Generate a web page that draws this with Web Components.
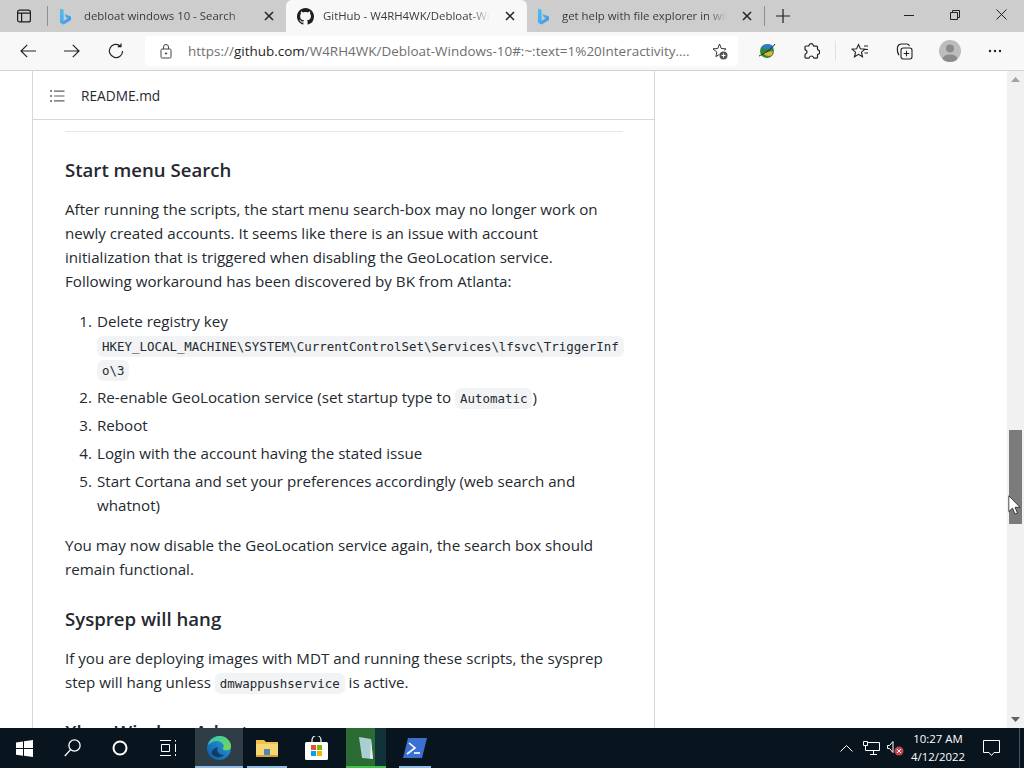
<!DOCTYPE html>
<html>
<head>
<meta charset="utf-8">
<title>GitHub - W4RH4WK/Debloat-Windows-10</title>
<style>
    html, body { margin: 0; height: 100%; overflow: hidden; background: #fff; }
    body { font-family: "Open Sans", "Liberation Sans", sans-serif; }
    #app { width: 1024px; height: 768px; display: flex; flex-direction: column; position: relative; overflow: hidden; }
</style>
</head>
<body>
<div id="app">
    <tab-strip>
        <browser-tab icon="bing">debloat windows 10 - Search</browser-tab>
        <browser-tab icon="github" active>GitHub - W4RH4WK/Debloat-Windows-10</browser-tab>
        <browser-tab icon="bing" style="margin-left:-1px">get help with file explorer in windows 10</browser-tab>
    </tab-strip>
    <address-bar></address-bar>
    <page-view>
        <readme-panel>
            <md-heading>Start menu Search</md-heading>
            <md-para>After running the scripts, the start menu search-box may no longer work on<br>newly created accounts. It seems like there is an issue with account<br>initialization that is triggered when disabling the GeoLocation service.<br>Following workaround has been discovered by BK from Atlanta:</md-para>
            <md-steps>
                <md-step n="1">Delete registry key<br><md-code>HKEY_LOCAL_MACHINE\SYSTEM\CurrentControlSet\Services\lfsvc\TriggerInf<br>o\3</md-code></md-step>
                <md-step n="2">Re-enable GeoLocation service (set startup type to <md-code>Automatic</md-code>)</md-step>
                <md-step n="3">Reboot</md-step>
                <md-step n="4">Login with the account having the stated issue</md-step>
                <md-step n="5">Start Cortana and set your preferences accordingly (web search and<br>whatnot)</md-step>
            </md-steps>
            <md-para>You may now disable the GeoLocation service again, the search box should<br>remain functional.</md-para>
            <md-heading>Sysprep will hang</md-heading>
            <md-para>If you are deploying images with MDT and running these scripts, the sysprep<br>step will hang unless <md-code>dmwappushservice</md-code> is active.</md-para>
            <md-heading>Xbox Wireless Adapter</md-heading>
        </readme-panel>
    </page-view>
    <win-taskbar></win-taskbar>
    <mouse-cursor></mouse-cursor>
</div>

<script>
const ICONS = {
    bing: `<svg width="13" height="17" viewBox="0 0 13 17"><defs><linearGradient id="b" x1="0" y1="0" x2="1" y2="1"><stop offset="0" stop-color="#4cc4ee"/><stop offset="1" stop-color="#4a8fe6"/></linearGradient></defs><path fill="url(#b)" d="M1 .5l3.600 1.300v10.900l4.200-2.400-2-1-1.300-3.300 6.500 2.400v3.700l-7.400 4.400L1 14.700z"/></svg>`,
    github: `<svg width="17" height="17" viewBox="0 0 16 16"><path fill="#1b1f23" d="M8 0C3.580 0 0 3.580 0 8c0 3.540 2.290 6.530 5.470 7.590.4.070.55-.17.55-.38 0-.19-.01-.82-.01-1.490-2.010.37-2.530-.49-2.690-.94-.09-.23-.48-.94-.82-1.130-.28-.15-.68-.52-.01-.53.63-.01 1.080.58 1.230.82.72 1.210 1.870.87 2.330.66.07-.52.28-.87.51-1.070-1.780-.2-3.640-.89-3.640-3.950 0-.87.31-1.590.82-2.150-.08-.2-.36-1.020.08-2.120 0 0 .67-.21 2.200.82.64-.18 1.320-.27 2-.27s1.360.09 2 .27c1.530-1.040 2.200-.82 2.200-.82.44 1.100.16 1.920.08 2.120.51.56.82 1.270.82 2.150 0 3.070-1.870 3.750-3.650 3.950.29.25.54.73.54 1.480 0 1.070-.01 1.930-.01 2.200 0 .21.15.46.55.38A8.010 8.010 0 0 0 16 8c0-4.420-3.580-8-8-8z"/></svg>`
};

class TabStrip extends HTMLElement {
    connectedCallback() {
        this.attachShadow({ mode: 'open' });
        this.shadowRoot.innerHTML = `
            <style>
                :host { display: flex; height: 32px; background: #cdcdcd; flex: none; align-items: stretch; color: #1d1d1d; }
                .side { width: 47px; display: flex; align-items: center; justify-content: center; padding-left: 1px; box-sizing: border-box; }
                .sep { width: 1px; height: 20px; background: #8f8f8f; align-self: center; }
                .tabs { display: flex; }
                .plus { width: 35px; display: flex; align-items: center; justify-content: center; }
                .space { flex: 1; }
                .win { width: 46px; display: flex; align-items: center; justify-content: center; margin-top: -3px; }
            </style>
            <div class="side">
                <svg width="16" height="16" viewBox="0 0 16 16" fill="none" stroke="#1d1d1d" stroke-width="1.2"><rect x="1.6" y="2.1" width="12.8" height="11.8" rx="2"/><path d="M1.6 5.2h12.8M5.6 5.2v8.7"/></svg>
            </div>
            <div class="sep"></div>
            <div class="tabs"><slot></slot></div>
            <div class="sep"></div>
            <div class="plus">
                <svg width="14" height="14" viewBox="0 0 14 14" stroke="#222" stroke-width="1.2"><path d="M7 0v14M0 7h14"/></svg>
            </div>
            <div class="space"></div>
            <div class="win"><svg width="10" height="10" viewBox="0 0 10 10" stroke="#222"><path d="M0 5.5h10"/></svg></div>
            <div class="win"><svg width="10" height="10" viewBox="0 0 10 10" fill="none" stroke="#222"><path d="M.5 2.5h7v7h-7zM2.5 2.5v-2h7v7h-2"/></svg></div>
            <div class="win"><svg width="11" height="11" viewBox="0 0 11 11" stroke="#222"><path d="M.5.5l10 10M10.500.5l-10 10"/></svg></div>
        `;
    }
}

class BrowserTab extends HTMLElement {
    connectedCallback() {
        this.attachShadow({ mode: 'open' });
        this.shadowRoot.innerHTML = `
            <style>
                :host { display: flex; align-items: center; width: 238px; height: 32px; box-sizing: border-box; padding: 0 11px; font-size: 11.4px; color: #3a3a3a; }
                :host([active]) { background: #f8f8f8; border-radius: 6px 6px 0 0; width: 241px; }
                .ic { flex: none; width: 25px; height: 17px; display: flex; align-items: center; }
                :host([active]) .ic { width: 26px; }
                .t { flex: 1; min-width: 0; margin-top: -2px; white-space: nowrap; overflow: hidden; -webkit-mask-image: linear-gradient(90deg, #000 88%, transparent 100%); mask-image: linear-gradient(90deg, #000 88%, transparent 100%); }
                .x { flex: none; width: 11px; margin-left: 15px; display: flex; }
            </style>
            <span class="ic">${ICONS[this.getAttribute('icon')]}</span>
            <span class="t"><slot></slot></span>
            <span class="x"><svg width="10" height="10" viewBox="0 0 10 10" stroke="#222" stroke-width="1.5"><path d="M1 1l8 8M9 1l-8 8"/></svg></span>
        `;
    }
}

class AddressBar extends HTMLElement {
    connectedCallback() {
        this.attachShadow({ mode: 'open' });
        this.shadowRoot.innerHTML = `
            <style>
                :host { display: flex; align-items: center; height: 38px; flex: none; background: #f8f8f8; border-bottom: 1px solid #d2d2d2; }
                .btn { width: 44px; display: flex; align-items: center; justify-content: center; flex: none; }
                svg { display: block; }
                .nav { padding-left: 6px; display: flex; }
                .url { width: 593px; height: 30px; margin-left: 7px; margin-right: 7px; background: #fff; border-radius: 4px; display: flex; align-items: center; box-sizing: border-box; padding-left: 14px; flex: none; }
                .addr { margin-left: 15px; font-size: 13.47px; color: #6f6f6f; white-space: nowrap; flex: 1; }
                .addr b { font-weight: 400; color: #1f1f1f; }
                .star { margin-right: 10px; display: flex; }
                .sep { width: 1px; height: 20px; background: #e2e2e2; flex: none; margin-left: 2px; }
                .avatar { width: 22px; height: 22px; border-radius: 50%; background: #bdbdbd; overflow: hidden; }
            </style>
            <div class="nav">
                <div class="btn"><svg width="16" height="14" viewBox="0 0 16 14" fill="none" stroke="#222" stroke-width="1.2"><path d="M16 7H1M7.2.8L1 7l6.2 6.2"/></svg></div>
                <div class="btn"><svg width="16" height="14" viewBox="0 0 16 14" fill="none" stroke="#222" stroke-width="1.2"><path d="M0 7h15M8.8.8L15 7l-6.2 6.2"/></svg></div>
                <div class="btn"><svg width="16" height="16" viewBox="0 0 16 16" fill="none" stroke="#222" stroke-width="1.2"><path d="M14.6 8A6.6 6.6 0 1 1 12.4 3M13 .4V3.6H9.8"/></svg></div>
            </div>
            <div class="url">
                <svg width="14" height="16" viewBox="0 0 14 16" fill="none" stroke="#444"><rect x="2" y="6" width="10" height="9" rx="1.2"/><path d="M4.5 6V4a2.5 2.5 0 0 1 5 0v2"/><circle cx="7" cy="10.5" r=".7" fill="#444"/></svg>
                <span class="addr">https://<b>github.com</b>/W4RH4WK/Debloat-Windows-10#:~:text=1%20Interactivity....</span>
                <span class="star"><svg width="18" height="18" viewBox="0 0 18 18" fill="none" stroke="#333"><path d="M9.500 12.300l-3.600 2.300 1-4.500L3 6.900l4.800-.4L9.500 2l1.800 4.500 4.700.4-1.700 1.500"/><circle cx="13.500" cy="13.500" r="4" fill="#555" stroke="none"/><path d="M11.500 13.500h4M13.500 11.500v4" stroke="#fff"/></svg></span>
            </div>
            <div class="btn"><svg width="18" height="16" viewBox="0 0 18 16"><ellipse cx="9" cy="8" rx="7" ry="7" fill="#2f8a2f"/><path d="M3 5c3-4 9-5 12-2l-3 4z" fill="#2b7bd0"/><path d="M5 10c2 3 6 4 9 2l1-4-5 1z" fill="#e2b23a"/><path d="M1 13C4 12 14 6 17 1" stroke="#222" fill="none"/></svg></div>
            <div class="btn"><svg width="17" height="17" viewBox="0 0 17 17" fill="none" stroke="#222" stroke-width="1.2"><path d="M6 2.500a2.200 2.200 0 0 1 4.300-.2c.1.500.5.800 1 .8h2.200a1 1 0 0 1 1 1v2c0 .5.300.9.800 1a2.200 2.200 0 0 1 0 4.100c-.5.100-.8.500-.8 1v2a1 1 0 0 1-1 1h-2c-.5 0-.9-.3-1-.8a2.200 2.200 0 0 0-4.100 0c-.1.500-.5.800-1 .8H3a1 1 0 0 1-1-1v-2.500c0-.5.400-.8.800-1a2 2 0 0 0 0-3.700C2.400 7.300 2 7 2 6.500V4a1 1 0 0 1 1-1h2c.5 0 .9-.1 1-.5z"/></svg></div>
            <div class="sep"></div>
            <div class="btn" style="width:48px"><svg width="18" height="17" viewBox="0 0 18 17" fill="none" stroke="#222" stroke-width="1.1"><path d="M7.500 1.500l1.900 4.300 4.600.4-3.500 3 1 4.600-4-2.400-4 2.400 1-4.600L1 6.200l4.600-.4zM13 3h4M14 6.500h3M13.500 10h3.500"/></svg></div>
            <div class="btn" style="width:40px"><svg width="17" height="17" viewBox="0 0 17 17" fill="none" stroke="#222" stroke-width="1.1"><rect x="5" y="5" width="11" height="11" rx="2.200"/><path d="M10.500 7.700v5.600M7.700 10.500h5.600M3 12.200C1.500 10 1 7 1.500 4 2 2 3.500 1 5.500 1h5.500c1.300 0 2 .7 2.500 2"/></svg></div>
            <div class="btn" style="width:52px"><div class="avatar"><svg width="22" height="22" viewBox="0 0 22 22"><circle cx="11" cy="8.500" r="4" fill="#8b8b8b"/><ellipse cx="11" cy="19" rx="7.500" ry="4.500" fill="#8b8b8b"/></svg></div></div>
            <div class="btn" style="width:38px"><svg width="14" height="4" viewBox="0 0 14 4" fill="#222"><circle cx="2" cy="2" r="1.200"/><circle cx="7" cy="2" r="1.200"/><circle cx="12" cy="2" r="1.200"/></svg></div>
        `;
    }
}

class PageView extends HTMLElement {
    connectedCallback() {
        this.attachShadow({ mode: 'open' });
        this.shadowRoot.innerHTML = `
            <style>
                :host { display: flex; flex: 1; min-height: 0; background: #fff; overflow: hidden; }
                .main { flex: 1; min-width: 0; overflow: hidden; padding-left: 32px; }
                .bar { width: 17px; flex: none; background: #f1f1f1; display: flex; flex-direction: column; align-items: center; }
                .arrow { height: 17px; flex: none; display: flex; align-items: center; justify-content: center; }
                .track { flex: 1; }
                .thumb { width: 13px; height: 94px; margin-top: 342px; background: #7b7b7b; }
            </style>
            <div class="main"><slot></slot></div>
            <div class="bar">
                <div class="arrow"><svg width="9" height="5" viewBox="0 0 9 5"><path d="M4.500 0L9 5H0z" fill="#a3a3a3"/></svg></div>
                <div class="track"><div class="thumb"></div></div>
                <div class="arrow"><svg width="9" height="5" viewBox="0 0 9 5"><path d="M4.500 5L9 0H0z" fill="#606060"/></svg></div>
            </div>
        `;
    }
}

class ReadmePanel extends HTMLElement {
    connectedCallback() {
        this.attachShadow({ mode: 'open' });
        this.shadowRoot.innerHTML = `
            <style>
                :host { display: block; width: 623px; box-sizing: border-box; border: 1px solid #d8d8d8; border-width: 0 1px; color: #24292f; font-size: 15.15px; }
                .head { height: 49px; box-sizing: border-box; padding: 1px 0 0 16px; border-bottom: 1px solid #d8d8d8; display: flex; align-items: center; gap: 16px; font-size: 13.7px; }
                .head svg { display: block; }
                .body { padding: 11px 31px 0 32px; }
                hr { height: 1px; margin: 0 0 23px; border: 0; background: #e6e6e6; }
            </style>
            <div class="head">
                <svg width="16" height="16" viewBox="0 0 16 16" fill="#57606a"><path d="M2 4a1 1 0 1 0 0-2 1 1 0 0 0 0 2zM5 2.500h10.500v1.200H5zM2 9a1 1 0 1 0 0-2 1 1 0 0 0 0 2zM5 7.400h10.500v1.200H5zM2 14a1 1 0 1 0 0-2 1 1 0 0 0 0 2zM5 12.300h10.500v1.200H5z"/></svg>
                <span>README.md</span>
            </div>
            <div class="body"><hr><slot></slot></div>
        `;
    }
}

class MdHeading extends HTMLElement {
    connectedCallback() {
        this.attachShadow({ mode: 'open' });
        this.shadowRoot.innerHTML = `
            <style>
                :host { display: block; font-size: 18.6px; font-weight: 600; line-height: 30px; margin: 0 0 12px; white-space: nowrap; }
                :host(:not(:first-child)) { margin-top: 23px; }
            </style>
            <slot></slot>
        `;
    }
}

class MdPara extends HTMLElement {
    connectedCallback() {
        this.attachShadow({ mode: 'open' });
        this.shadowRoot.innerHTML = `
            <style>
                :host { display: block; line-height: 24px; margin: 0 0 16px; white-space: nowrap; }
            </style>
            <slot></slot>
        `;
    }
}

class MdSteps extends HTMLElement {
    connectedCallback() {
        this.attachShadow({ mode: 'open' });
        this.shadowRoot.innerHTML = `
            <style>
                :host { display: flex; flex-direction: column; gap: 4px; margin: 0 0 16px; padding-left: 32px; white-space: nowrap; }
            </style>
            <slot></slot>
        `;
    }
}

class MdStep extends HTMLElement {
    connectedCallback() {
        this.attachShadow({ mode: 'open' });
        this.shadowRoot.innerHTML = `
            <style>
                :host { display: block; position: relative; line-height: 24px; }
                .n { position: absolute; right: 100%; margin-right: 5px; }
            </style>
            <span class="n">${this.getAttribute('n')}.</span><slot></slot>
        `;
    }
}

class MdCode extends HTMLElement {
    connectedCallback() {
        this.attachShadow({ mode: 'open' });
        // no whitespace around the slot: it would show inside the grey box
        this.shadowRoot.innerHTML = `<style>
                :host { display: inline; font-family: "DejaVu Sans Mono", "Liberation Mono", monospace; font-size: 12.45px; line-height: 1; background: #f2f3f4; border-radius: 6px; padding: 3px 5px; -webkit-box-decoration-break: clone; box-decoration-break: clone; }
            </style><slot></slot>`;
    }
}

class WinTaskbar extends HTMLElement {
    connectedCallback() {
        this.attachShadow({ mode: 'open' });
        this.shadowRoot.innerHTML = `
            <style>
                :host { display: flex; height: 40px; flex: none; background: #08141e; color: #fff; align-items: stretch; }
                svg { display: block; }
                .btn { width: 48px; flex: none; display: flex; align-items: center; justify-content: center; position: relative; box-sizing: border-box; }
                .on::after { content: ""; position: absolute; left: 0; right: 0; bottom: 0; height: 2px; background: #90bde8; }
                .open::after { content: ""; position: absolute; left: 4px; right: 4px; bottom: 0; height: 2px; background: #90bde8; }
                .edge { background: #2f3d47; margin-left: 3px; }
                .green { width: 40px; margin-left: 6px; background: linear-gradient(90deg, #2b6b34 0, #2b6b34 29px, #12323a 29px); }
                .green::after { content: ""; position: absolute; left: 0; right: 0; bottom: 0; height: 2px; background: #3fc24a; }
                .space { flex: 1; }
                .tray { display: flex; align-items: center; }
                .tray > div { display: flex; justify-content: center; }
                .chev { width: 26px; }
                .ti { width: 24px; }
                .clock { width: 60px; margin-left: 1px; font-size: 11.4px; line-height: 18px; text-align: center; white-space: nowrap; flex-direction: column; }
                .notif { width: 44px; margin-left: 1px; margin-right: 6px; }
                .endline { width: 5px; align-self: stretch; border-left: 1px solid #4a5560; box-sizing: border-box; }
            </style>
            <div class="btn"><svg width="17" height="17" viewBox="0 0 17 17" fill="#fff"><path d="M0 2.400l7-1v6.700H0zM8 1.300L17 0v8.100H8zM0 9h7v6.700l-7-1zM8 9h9v8l-9-1.300z"/></svg></div>
            <div class="btn"><svg width="17" height="18" viewBox="0 0 17 18" fill="none" stroke="#fff" stroke-width="1.300"><circle cx="10.500" cy="6.500" r="5.600"/><path d="M6.600 10.600L.8 17"/></svg></div>
            <div class="btn"><svg width="16" height="16" viewBox="0 0 16 16" fill="none" stroke="#fff" stroke-width="2"><circle cx="8" cy="8" r="6.500"/></svg></div>
            <div class="btn"><svg width="17" height="16" viewBox="0 0 17 16" fill="none" stroke="#fff"><path d="M0 .5h11M0 15.500h11M1.500 4.500h8v7h-8zM15.500 0v1.500M15.500 4v8M15.500 14v2"/></svg></div>
            <div class="btn on edge"><svg width="26" height="26" viewBox="0 0 26 26"><defs><linearGradient id="e1" x1="0" y1="1" x2="1" y2="0"><stop offset="0" stop-color="#0c59a4"/><stop offset="1" stop-color="#2ba3e0"/></linearGradient><linearGradient id="e2" x1="0" y1="0" x2="1" y2="1"><stop offset="0" stop-color="#36c7b0"/><stop offset="1" stop-color="#7ad84f"/></linearGradient></defs><circle cx="13" cy="13" r="12" fill="url(#e1)"/><path d="M2 10C4 3 10 1 14 1c6 0 11 5 11 10 0 4-4 5-7 4-2-1-1-3 0-4-1-3-4-5-7-5-4 0-7 2-9 4z" fill="url(#e2)"/><path d="M12 12c-2 3 0 8 6 8-3 3-9 3-12-1-1-3 2-6 6-7z" fill="#08141e" opacity=".55"/></svg></div>
            <div class="btn open"><svg width="22" height="20" viewBox="0 0 22 20"><path d="M0 2h8l2 2h12v15H0z" fill="#f2c04c"/><path d="M0 6h22v13H0z" fill="#f7d774"/><rect x="8" y="11" width="6" height="6" fill="#4b88b8"/><path d="M0 17h22v2H0z" fill="#d9a334"/></svg></div>
            <div class="btn" style="margin-left:1px"><svg width="23" height="24" viewBox="0 0 23 24"><path d="M7 7V4a4.500 4.500 0 0 1 9 0v3" fill="none" stroke="#fff" stroke-width="1.200"/><rect x="0" y="6" width="23" height="18" rx="1.500" fill="#fff"/><rect x="6" y="9" width="5" height="5" fill="#e8502f"/><rect x="12" y="9" width="5" height="5" fill="#7ab800"/><rect x="6" y="15" width="5" height="5" fill="#00a4ef"/><rect x="12" y="15" width="5" height="5" fill="#f4b400"/></svg></div>
            <div class="btn green"><svg width="16" height="24" viewBox="0 0 16 24"><path d="M1 1l12 2 2 20-11-1z" fill="#a9cfd0"/><path d="M13 3l2 20-3-.5z" fill="#dfeeee"/></svg></div>
            <div class="btn open" style="margin-left:9px;width:40px"><svg width="24" height="20" viewBox="0 0 24 20"><path d="M5 0h19l-5 20H0z" fill="#3b6fd0"/><path d="M6 5l6 5-8 6" fill="none" stroke="#fff" stroke-width="1.600"/><path d="M11 15h6" stroke="#fff" stroke-width="1.600"/></svg></div>
            <div class="space"></div>
            <div class="tray">
                <div class="chev"><svg width="13" height="8" viewBox="0 0 13 8" fill="none" stroke="#fff"><path d="M.5 7.500l6-6 6 6"/></svg></div>
                <div class="ti"><svg width="17" height="14" viewBox="0 0 17 14" fill="none" stroke="#fff"><path d="M4.500 1.500H16.500v8H4.500M.5.500h4v4h-4zM2.500 4.500v5h5M10.500 9.500v4M7 13.500h7"/></svg></div>
                <div class="ti"><svg width="17" height="16" viewBox="0 0 17 16"><path d="M.5 5.500h2L6 1.500v11l-3.500-4h-2z" fill="none" stroke="#fff"/><circle cx="12" cy="11" r="4.500" fill="#c8414f"/><path d="M10 9l4 4M14 9l-4 4" stroke="#fff"/></svg></div>
                <div class="clock"><span>10:27 AM</span><span>4/12/2022</span></div>
                <div class="notif"><svg width="17" height="16" viewBox="0 0 17 16" fill="none" stroke="#fff"><path d="M.5.500h16v12H11l-2.500 3-2.500-3H.5z"/></svg></div>
                <div class="endline"></div>
            </div>
        `;
    }
}

class MouseCursor extends HTMLElement {
    connectedCallback() {
        this.attachShadow({ mode: 'open' });
        this.shadowRoot.innerHTML = `
            <style>
                :host { position: absolute; left: 1008px; top: 495px; width: 13px; height: 20px; }
                svg { display: block; }
            </style>
            <svg width="13" height="20" viewBox="0 0 13 20"><path d="M.8.800v15.800l3.700-3.500 2.500 6 2.500-1-2.500-5.800h5z" fill="#fff" stroke="#222" stroke-width=".8"/></svg>
        `;
    }
}

customElements.define('tab-strip', TabStrip);
customElements.define('browser-tab', BrowserTab);
customElements.define('address-bar', AddressBar);
customElements.define('page-view', PageView);
customElements.define('readme-panel', ReadmePanel);
customElements.define('md-heading', MdHeading);
customElements.define('md-para', MdPara);
customElements.define('md-steps', MdSteps);
customElements.define('md-step', MdStep);
customElements.define('md-code', MdCode);
customElements.define('win-taskbar', WinTaskbar);
customElements.define('mouse-cursor', MouseCursor);
</script>
</body>
</html>
